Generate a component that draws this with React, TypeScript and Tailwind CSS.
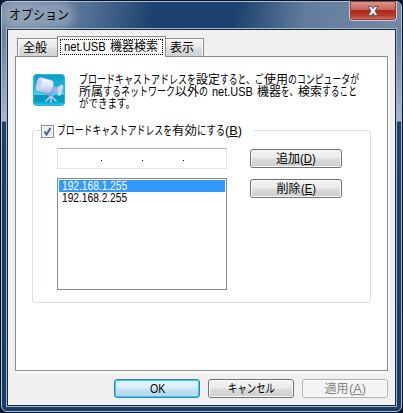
import { useLayoutEffect, useRef, useState } from 'react';
import type { ReactNode } from 'react';
import clsx from 'clsx';

// Squeezes a run of text into a fixed width, like the condensed kana of the system font
function Fit({ w, children }: { w: number; children: ReactNode }) {
  const ref = useRef<HTMLSpanElement>(null);
  const [scale, setScale] = useState(1);

  useLayoutEffect(() => {
    if (ref.current && ref.current.offsetWidth > 0) {
      setScale(w / ref.current.offsetWidth);
    }
  }, [w, children]);

  return (
    <span className="inline-flex shrink-0" style={{ width: w }}>
      <span
        ref={ref}
        className="inline-block shrink-0 origin-left whitespace-pre"
        style={{ transform: `scaleX(${scale})` }}
      >
        {children}
      </span>
    </span>
  );
}

type Run = [string, number];

function Line({ runs }: { runs: Run[] }) {
  return (
    <div className="flex h-3 leading-3">
      {runs.map(([text, w], i) => (
        <Fit key={i} w={w}>{text}</Fit>
      ))}
    </div>
  );
}

const description: Run[][] = [
  [['ブロードキャストアドレスを', 117], ['設定', 24], ['すると、ご', 44], ['使用', 24], ['のコンピュータが', 71]],
  [['所属', 24], ['するネットワーク', 72], ['以外', 24], ['の', 9], [' ', 4], ['net.USB', 41], [' ', 4], ['機器', 24], ['を、', 17], ['検索', 24], ['すること', 35]],
  [['ができます。', 56]],
];

const addresses = ['192.168.1.255', '192.168.2.255'];

function Button({
  variant = 'normal',
  className,
  children,
}: {
  variant?: 'normal' | 'default' | 'disabled';
  className?: string;
  children: ReactNode;
}) {
  return (
    <button
      disabled={variant === 'disabled'}
      className={clsx(
        'flex h-[19px] items-center justify-center rounded-[3px] border leading-3',
        variant === 'normal' &&
          'border-[#707070] bg-[linear-gradient(#f3f3f3,#ebebeb_48%,#dcdcdc_52%,#cdcdcd)] shadow-[inset_0_0_0_1px_#fafafa]',
        variant === 'default' &&
          'border-[#3c7fb1] bg-[linear-gradient(#e8f5fc,#d8eef9_48%,#c3e3f3_52%,#b0d7ea)] shadow-[inset_0_0_0_1px_#20d4fa]',
        variant === 'disabled' && 'border-[#adb2b5] bg-[#f4f4f4] text-[#838383] shadow-[inset_0_0_0_1px_#fbfbfb]',
        className,
      )}
    >
      {children}
    </button>
  );
}

function TelescopeIcon() {
  return (
    <svg width="32" height="32" viewBox="0 0 32 32" className="shrink-0">
      <defs>
        <linearGradient id="sky" x1="0" y1="0" x2="0" y2="1">
          <stop offset="0" stopColor="#079fc8" />
          <stop offset="0.35" stopColor="#12b5dc" />
          <stop offset="0.66" stopColor="#38daf2" />
          <stop offset="0.67" stopColor="#0696bb" />
          <stop offset="0.88" stopColor="#079fc4" />
          <stop offset="1" stopColor="#25d3ed" />
        </linearGradient>
        <linearGradient id="tube" x1="0" y1="0" x2="0" y2="1">
          <stop offset="0" stopColor="#f8faff" />
          <stop offset="0.5" stopColor="#dce5fa" />
          <stop offset="1" stopColor="#a3b6e2" />
        </linearGradient>
      </defs>
      <rect x="0.5" y="0.5" width="31" height="31" rx="3" fill="url(#sky)" stroke="#20b9dc" />
      <path d="M18 22 L12.5 27.5 M18 22 V28.5 M18 22 L23.5 27.5" stroke="#b9cbef" strokeWidth="1.6" fill="none" />
      <path d="M18.5 12 L24 13.5 L28.5 10.5 L30.5 12 L28 21 L25.5 22 L23.500 19 L17.500 18 Z" fill="#9fb3e2" />
      <path d="M25 13.500 L28.500 10.500 L30.500 12 L28 21 L25.500 22 Q24 18 25 13.500 Z" fill="#ccd8f6" />
      <path d="M7.500 3.200 L18.500 6 Q21.500 7.500 20.800 11.500 L19 17 Q17.800 20 15 20 L4.500 17.500 Q2 16.500 3 11.500 L4.500 6 Q5.500 3 7.500 3.200 Z" fill="url(#tube)" stroke="#6f8cc8" strokeWidth="0.7" />
      <path d="M7.500 3.700 Q9.500 6 8 11 Q6.500 16 4.500 16.800 Q2.500 15.500 3.800 10 Q5.300 4.200 7.500 3.700 Z" fill="#c3d1f2" />
      <path d="M13 20.500 L21 21.500" stroke="#8aa2d8" strokeWidth="1.500" />
    </svg>
  );
}

function TitleBar() {
  return (
    <div className="flex h-[26px] items-start justify-between pl-[7px]">
      <div className="mt-[5px] h-4 rounded-full bg-white/25 text-[13px] leading-4 shadow-[0_0_8px_6px_rgba(255,255,255,0.25)]">
        <Fit w={60}>オプション</Fit>
      </div>
      <button className="-mt-px mr-[4px] flex h-5 w-12 items-center justify-center rounded-b-[4px] border border-t-0 border-[#d5c6cf] bg-[linear-gradient(#d99a91,#c9675c_45%,#a92a1c_48%,#b73a26_75%,#d4786b)] shadow-[inset_0_0_0_1px_#8d3f3c]">
        <svg width="12" height="10" viewBox="0 0 12 10">
          <path d="M1 0.500 H4.200 L6 2.600 L7.800 0.500 H11 L8 5 L11 9.500 H7.800 L6 7.400 L4.200 9.500 H1 L4 5 Z" fill="#f6f6f8" stroke="#535666" strokeWidth="1" />
        </svg>
      </button>
    </div>
  );
}

function Tabs() {
  return (
    <div className="relative z-10 -mb-px flex h-[21px] items-end pl-[2px]">
      <div className="mb-px flex h-[18px] w-10 items-center border border-r-0 border-b-0 border-[#898c95] bg-[linear-gradient(#f3f3f3,#ebebeb_48%,#dddddd_52%,#d2d2d2)] pl-[5px] leading-3 shadow-[inset_1px_1px_0_#fafafa]">
        <Fit w={24}>全般</Fit>
      </div>
      <div className="h-[21px] w-[109px] border border-b-0 border-[#898c95] bg-white px-[2px] pt-[2px]">
        <div className="flex h-4 items-center border border-dotted border-black pb-px pl-[3px] leading-3">
          <Fit w={42}>net.USB</Fit>
          <Fit w={4}> </Fit>
          <Fit w={48}>機器検索</Fit>
        </div>
      </div>
      <div className="mb-px flex h-[18px] w-[38px] items-center border border-b-0 border-l-0 border-[#898c95] bg-[linear-gradient(#f3f3f3,#ebebeb_48%,#dddddd_52%,#d2d2d2)] pl-1 leading-3 shadow-[inset_-1px_1px_0_#fafafa]">
        <Fit w={24}>表示</Fit>
      </div>
    </div>
  );
}

function BroadcastGroup() {
  return (
    <fieldset className="relative mt-6 ml-4 h-[173px] w-[339px] rounded-[3px] border border-[#d5dfe5]">
      <label className="absolute -top-[7px] left-2 flex h-[14px] items-center bg-white pr-3 leading-3">
        <span className="mr-[3px] flex h-[13px] w-[13px] items-center justify-center border border-[#8e8f8f] bg-[#e8eaed] shadow-[inset_0_0_0_1px_#f6f6f6]">
          <svg width="9" height="9" viewBox="0 0 9 9" fill="none">
            <path d="M1.500 4.500 L3.500 7.500 L7.500 1" stroke="#4a5f97" strokeWidth="2" />
          </svg>
        </span>
        <Fit w={115}>ブロードキャストアドレスを</Fit>
        <Fit w={25}>有効</Fit>
        <Fit w={28}>にする</Fit>
        <Fit w={17}>(<u>B</u>)</Fit>
      </label>
      <div className="mt-[17px] ml-6 flex gap-[23px]">
        <div className="flex w-[170px] flex-col gap-[9px]">
          <div className="flex h-[21px] items-center border border-[#e2e3ea] border-t-[#abadb3] pl-[43px]">
            <span className="mt-[3px] h-px w-px bg-black" />
            <span className="mt-[3px] ml-10 h-px w-px bg-black" />
            <span className="mt-[3px] ml-10 h-px w-px bg-black" />
          </div>
          <div className="h-[112px] border border-[#828790] p-px">
            {addresses.map((address, i) => (
              <div key={address} className={clsx('flex h-3 pl-[3px] text-[13px] leading-3', i === 0 && 'bg-[#3399ff] text-white')}>
                <Fit w={65}>{address}</Fit>
              </div>
            ))}
          </div>
        </div>
        <div className="flex flex-col gap-[11px] pt-px">
          <Button className="w-[92px]">
            <Fit w={24}>追加</Fit>
            <Fit w={16}>(<u>D</u>)</Fit>
          </Button>
          <Button className="w-[92px]">
            <Fit w={24}>削除</Fit>
            <Fit w={15}>(<u>E</u>)</Fit>
          </Button>
        </div>
      </div>
    </fieldset>
  );
}

export default function App() {
  return (
    <div className="h-[413px] w-[403px] overflow-hidden bg-[#061329] p-px font-['Liberation_Sans','Noto_Sans_CJK_JP',sans-serif] text-[12px] text-black">
      <div className="h-[411px] w-[401px] rounded-[6px] border border-[#a9bdd4] bg-[linear-gradient(#5d7595,#768ba8_50px,#a9b8ca_119px,#1d426f_120px,#193b65)]">
        <div className="h-[409px] rounded-[5px] bg-[linear-gradient(100deg,#7489a6,#526f94_22%,#1c426d_38%,#1b416c_58%,#647d9d_76%,#7388a5)] bg-size-[100%_27px] bg-no-repeat">
          <TitleBar />
          <div className="mx-1 h-[379px] border border-[#a3b5c9] bg-[#f0f0f0]">
            <div className="h-[377px] border border-[#17283b] px-[7px] pt-[6px]">
              <Tabs />
              <div className="h-[315px] w-[373px] border border-[#898c95] bg-white pt-[17px] shadow-[1px_1px_0_1px_#fafafa]">
                <div className="flex h-8 pl-[17px]">
                  <TelescopeIcon />
                  <div className="ml-[14px] flex flex-col">
                    {description.map((runs, i) => (
                      <Line key={i} runs={runs} />
                    ))}
                  </div>
                </div>
                <BroadcastGroup />
              </div>
              <div className="mt-2 flex w-[373px] justify-end gap-2">
                <Button variant="default" className="w-[86px]">
                  <Fit w={15}>OK</Fit>
                </Button>
                <Button className="w-[86px]">
                  <Fit w={47}>キャンセル</Fit>
                </Button>
                <Button variant="disabled" className="w-[86px]">
                  <Fit w={24}>適用</Fit>
                  <Fit w={17}>(<u>A</u>)</Fit>
                </Button>
              </div>
            </div>
          </div>
        </div>
      </div>
    </div>
  );
}
